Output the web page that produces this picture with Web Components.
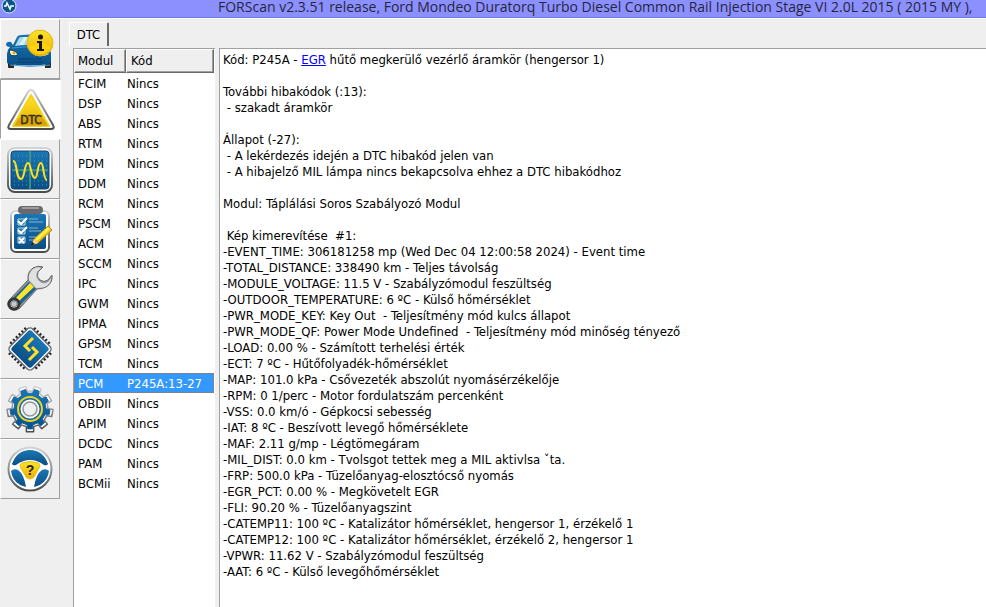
<!DOCTYPE html>
<html lang="hu">
<head>
<meta charset="utf-8">
<title>FORScan</title>
<style>
  body {
    margin: 0;
    background: #efefef;
    color: #000;
    font: 13px/16px "DejaVu Sans Condensed", "DejaVu Sans", sans-serif;
    font-stretch: condensed;
  }
  p {
    min-height: 16px;
    margin: 0;
    white-space: pre-wrap;
  }
  a { color: #00f; }
</style>
</head>
<body>
<forscan-window>
  <title-bar slot="title">FORScan v2.3.51 release, Ford Mondeo Duratorq Turbo Diesel Common Rail Injection Stage VI 2.0L 2015 ( 2015 MY ),</title-bar>
  <tool-button slot="tools" icon="car" label="Jármű"></tool-button>
  <tool-button slot="tools" icon="dtc" label="DTC" pressed></tool-button>
  <tool-button slot="tools" icon="scope" label="Oszcilloszkóp"></tool-button>
  <tool-button slot="tools" icon="tests" label="Tesztek"></tool-button>
  <tool-button slot="tools" icon="service" label="Szerviz"></tool-button>
  <tool-button slot="tools" icon="chip" label="Konfiguráció"></tool-button>
  <tool-button slot="tools" icon="gear" label="Beállítások"></tool-button>
  <tool-button slot="tools" icon="wheel" label="Súgó"></tool-button>
  <page-tab slot="tab">DTC</page-tab>
  <module-table slot="list" selected="PCM"></module-table>
  <report-view slot="report">
    <p>Kód: P245A - <a href="#egr">EGR</a> hűtő megkerülő vezérlő áramkör (hengersor 1)</p>
    <p></p>
    <p>További hibakódok (:13):</p>
    <p> - szakadt áramkör</p>
    <p></p>
    <p>Állapot (-27):</p>
    <p> - A lekérdezés idején a DTC hibakód jelen van</p>
    <p> - A hibajelző MIL lámpa nincs bekapcsolva ehhez a DTC hibakódhoz</p>
    <p></p>
    <p>Modul: Táplálási Soros Szabályozó Modul</p>
    <p></p>
    <p> Kép kimerevítése  #1:</p>
    <p>-EVENT_TIME: 306181258 mp (Wed Dec 04 12:00:58 2024) - Event time</p>
    <p>-TOTAL_DISTANCE: 338490 km - Teljes távolság</p>
    <p>-MODULE_VOLTAGE: 11.5 V - Szabályzómodul feszültség</p>
    <p>-OUTDOOR_TEMPERATURE: 6 ºC - Külső hőmérséklet</p>
    <p>-PWR_MODE_KEY: Key Out  - Teljesítmény mód kulcs állapot</p>
    <p>-PWR_MODE_QF: Power Mode Undefined  - Teljesítmény mód minőség tényező</p>
    <p>-LOAD: 0.00 % - Számított terhelési érték</p>
    <p>-ECT: 7 ºC - Hűtőfolyadék-hőmérséklet</p>
    <p>-MAP: 101.0 kPa - Csővezeték abszolút nyomásérzékelője</p>
    <p>-RPM: 0 1/perc - Motor fordulatszám percenként</p>
    <p>-VSS: 0.0 km/ó - Gépkocsi sebesség</p>
    <p>-IAT: 8 ºC - Beszívott levegő hőmérséklete</p>
    <p>-MAF: 2.11 g/mp - Légtömegáram</p>
    <p>-MIL_DIST: 0.0 km - Tvolsgot tettek meg a MIL aktivlsa ˇta.</p>
    <p>-FRP: 500.0 kPa - Tüzelőanyag-elosztócső nyomás</p>
    <p>-EGR_PCT: 0.00 % - Megkövetelt EGR</p>
    <p>-FLI: 90.20 % - Tüzelőanyagszint</p>
    <p>-CATEMP11: 100 ºC - Katalizátor hőmérséklet, hengersor 1, érzékelő 1</p>
    <p>-CATEMP12: 100 ºC - Katalizátor hőmérséklet, érzékelő 2, hengersor 1</p>
    <p>-VPWR: 11.62 V - Szabályzómodul feszültség</p>
    <p>-AAT: 6 ºC - Külső levegőhőmérséklet</p>
  </report-view>
</forscan-window>

<script>
const polar = (r, deg) => {
  const a = deg * Math.PI / 180
  return `${(30 + r * Math.cos(a)).toFixed(1)} ${(30 + r * Math.sin(a)).toFixed(1)}`
}

// nine-toothed outline around 30,30
const gearPath = (outer, inner, tip, root) => {
  const points = []
  for (let i = 0; i < 9; i++) {
    const a = i * 40 + 90
    points.push(polar(inner, a - root), polar(outer, a - tip), polar(outer, a + tip), polar(inner, a + root))
  }
  return `M${points.join('L')}Z`
}

const defs = `
  <defs>
    <linearGradient id="metal" x1="0" y1="0" x2="0" y2="1">
      <stop offset="0" stop-color="#d2d3d4"/><stop offset="1" stop-color="#4b4c4e"/>
    </linearGradient>
    <linearGradient id="blue" x1="0" y1="0" x2="0" y2="1">
      <stop offset="0" stop-color="#1b76b4"/><stop offset="1" stop-color="#0a4f86"/>
    </linearGradient>
    <linearGradient id="gold" x1="0" y1="0" x2="0" y2="1">
      <stop offset="0" stop-color="#ffe52a"/><stop offset="1" stop-color="#e7ae05"/>
    </linearGradient>
  </defs>
`

const icons = {
  car: `
    <path d="M8 43h6v6h-5q-1 0-1-1zM45 43h6v5q0 1-1 1h-5z" fill="#282828"/>
    <path d="M6 25q1-3 5-2l2 3 4-8q1-2 4-2 9-1 18 0 3 0 4 3l4 9q4 3 4 7v8q0 2-2 2-20 3-40 0-2 0-2-2v-8q0-4 3-7-4 0-4-3z" fill="url(#blue)"/>
    <path d="M15 27l4-8q1-1 3-1h15l4 9q-13-2-26 0z" fill="#a9dbea"/>
    <path d="M19 26l5-8h4l-5 8z" fill="#d8f2f5"/>
    <path d="M12 29q18-3 37 0" fill="none" stroke="#3c94cf"/>
    <path d="M9 31q7 0 9 5-6 2-8-1z" fill="#fff6c8" stroke="#073f70"/>
    <circle cx="14" cy="34" r="1.5" fill="#eda50d"/>
    <path d="M49 35l-5 2-3-1 3-4z" fill="#eef6d9"/>
    <path d="M18 40h24M17 43h26" stroke="#073e70"/>
    <path d="M10 46q20 3 40 0" fill="none" stroke="#4ba5d8"/>
    <circle cx="40" cy="24" r="13" fill="url(#gold)" stroke="#eab317"/>
    <path d="M29 28a12 12 0 0 0 22 0q-9-7-22 0z" fill="#ffd20c"/>
    <circle cx="40.500" cy="18" r="2.500" fill="#151515"/>
    <path d="M38 22h4v8h2v2h-7v-2h2v-6h-2v-2z" fill="#151515"/>`,
  dtc: `
    <path d="M31 11q2 0 3 2l19 33q2 4-2 4H11q-4 0-2-4l19-33q1-2 3-2z" fill="#fff" stroke="url(#metal)" stroke-width="2"/>
    <path d="M31 16L49 47H13z" fill="url(#gold)" stroke="#f6d117" stroke-width="2" stroke-linejoin="round"/>
    <path d="M18 40q14-8 26 0l4 7H14z" fill="#c69209" opacity=".5"/>
    <text x="31" y="45" text-anchor="middle" font-family="DejaVu Sans Condensed, DejaVu Sans" font-size="12" fill="#333019" stroke="#333019" stroke-width=".5">DTC</text>`,
  scope: `
    <rect x="8" y="9" width="44" height="44" rx="7" fill="#fff" stroke="url(#metal)" stroke-width="2"/>
    <rect x="11" y="12" width="38" height="38" rx="3" fill="url(#blue)" stroke="#174568"/>
    <path d="M14 17h33M14 22h33M14 27h33M14 32h33M14 37h33M14 42h33M14 46h33" stroke="#3faaa1" stroke-dasharray="1 3"/>
    <path d="M30 12v38M12 31h36" stroke="#4e9c7e" stroke-width="1.500"/>
    <path d="M13 22q2 0 3 5c1 7 2 13 5 13 4 0 3-16 7-16 3 0 3 15 7 15 3 0 2-15 6-15 3 0 2 17 6 17" fill="none" stroke="#ffe21b" stroke-width="2"/>`,
  tests: `
    <rect x="11" y="12" width="38" height="41" rx="5" fill="#fff" stroke="url(#metal)" stroke-width="2"/>
    <rect x="14" y="15" width="32" height="35" rx="2" fill="url(#blue)"/>
    <rect x="18" y="7" width="25" height="8" rx="4" fill="#67696c"/>
    <path d="M22 9h17" stroke="#9a9c9e" stroke-width="2"/>
    <path d="M18 20h7v6h-7zM18 29h7v6h-7zM18 38h7v6h-7z" fill="#2579a9" stroke="#b8dbe8"/>
    <path d="M18 22l3 3 6-6M18 31l3 3 6-6M19 39l5 5M24 39l-5 5" fill="none" stroke="#fff" stroke-width="2"/>
    <path d="M29 20h9M29 23h14M29 29h9M29 32h12M29 38h7M29 41h4" stroke="#82b4d2"/>
    <path d="M32 46l2-6L48 27l4 4-14 13z" fill="#f2c515" stroke="#b48a08"/>
    <path d="M35 40L48 28l2 2-13 12z" fill="#fff056"/>
    <path d="M32 46l2-6 4 4z" fill="#f5d7a0"/><path d="M31 47l1-4 3 2z" fill="#222"/>`,
  service: `
    <path d="M11 39l17-18q-1-8 5-12 5-3 10-1l-5 5q-2 5 2 8t8 0l4-5q1 8-6 12-4 2-9 2L20 49q-5 4-10 1-5-5 1-11z" fill="#929496" stroke="#696b6d"/>
    <path d="M29 21q-1-7 4-11 4-3 8-1l-4 4q-2 5 2 9t9 1l3-4q0 6-6 9-4 1-9 1z" fill="#dfe0e1"/>
    <path d="M12 40l17-17 7 7-17 17z" fill="#146399"/>
    <path d="M15 40l15-16 4 4-16 15z" fill="#ffe32a"/>
    <circle cx="14" cy="45" r="5" fill="#edf0f1" stroke="#343536" stroke-width="3"/>
    <circle cx="14" cy="45" r="3" fill="#c5c8c9" stroke="#8d8f90"/>`,
  chip: `
    <g transform="rotate(45 30 30)">
      <path d="M19 11v38M23 11v38M27 11v38M31 11v38M35 11v38M39 11v38M11 19h38M11 23h38M11 27h38M11 31h38M11 35h38M11 39h38" stroke="#252628" stroke-width="2"/>
      <rect x="14" y="14" width="32" height="32" rx="4" fill="#fff" stroke="#6d6e70" stroke-width="1.500"/>
      <rect x="16" y="16" width="28" height="28" rx="3" fill="url(#blue)"/>
    </g>
    <path d="M33 19L25 27L30 32M29 41L37 33L32 28" fill="none" stroke="#ffe02a" stroke-width="3"/>`,
  gear: `
    <path d="${gearPath(23, 18, 9, 12)}" fill="#fff" stroke="url(#metal)" stroke-width="1.500" stroke-linejoin="round"/>
    <path d="${gearPath(20, 16, 7, 11)}" fill="url(#blue)" stroke="#1567a3" stroke-linejoin="round"/>
    <circle cx="30" cy="30" r="12" fill="#176aa7" stroke="#e8d325" stroke-width="2"/>
    <circle cx="30" cy="30" r="8" fill="#efefef" stroke="#fff" stroke-width="3"/>
    <circle cx="30" cy="30" r="7" fill="#efefef" stroke="#939597" stroke-width="1.500"/>`,
  wheel: `
    <circle cx="30" cy="30" r="21.500" fill="#fff" stroke="url(#metal)" stroke-width="2"/>
    <path d="M12 25q5-14 18-14t18 14q-1 2-4 1-14-10-28 0-3 1-4-1z" fill="url(#blue)"/>
    <path d="M11 32q3-3 7-1 6 4 8 17-13-3-15-16zM49 32q-3-3-7-1-6 4-8 17 13-3 15-16z" fill="url(#blue)"/>
    <path d="M22 24q8-3 16 0 3 1 1 5l-5 9q-4 4-8 0l-5-9q-2-4 1-5z" fill="url(#gold)" stroke="#e9bd0d"/>
    <text x="30" y="36" text-anchor="middle" font-family="Liberation Sans" font-size="14" font-weight="bold" fill="#252414">?</text>`,
}

class ForscanWindow extends HTMLElement {
  constructor() {
    super()
    this.attachShadow({ mode: 'open' }).innerHTML = `
      <style>
        :host {
          display: flex;
          flex-direction: column;
          height: 100vh;
          overflow: hidden;
        }
        .body {
          display: flex;
          flex: 1;
          min-height: 0;
          border-top: 1px solid #fafafa;
        }
        nav {
          width: 61px;
          flex: none;
        }
        main {
          display: flex;
          flex: 1;
          flex-direction: column;
          min-width: 0;
          padding-left: 8px;
        }
        .panes {
          display: grid;
          grid-template-columns: 142px 1fr;
          flex: 1;
          gap: 4px;
          min-height: 0;
          padding-left: 4px;
        }
      </style>
      <slot name="title"></slot>
      <div class="body">
        <nav><slot name="tools"></slot></nav>
        <main>
          <slot name="tab"></slot>
          <div class="panes">
            <slot name="list"></slot>
            <slot name="report"></slot>
          </div>
        </main>
      </div>
    `
  }
}

class TitleBar extends HTMLElement {
  constructor() {
    super()
    this.attachShadow({ mode: 'open' }).innerHTML = `
      <style>
        :host {
          display: flex;
          box-sizing: border-box;
          height: 18px;
          overflow: hidden;
          padding-left: 1px;
          border-bottom: 1px solid #7478df;
          background: #8c90ff;
          color: #25263b;
          font: 14px/14px "Open Sans", "Noto Sans", sans-serif;
          font-stretch: normal;
          white-space: nowrap;
        }
        svg { flex: none; }
        span { padding-left: 201px; }
      </style>
      <svg width="16" height="14" viewBox="0 0 16 14" aria-hidden="true">
        <circle cx="8" cy="6" r="7" fill="#0d568a" stroke="#dfe9f2"/>
        <path d="M3 6h2l1-3 3 6 1-3h3" fill="none" stroke="#fff" stroke-width="1.500"/>
      </svg>
      <span><slot></slot></span>
    `
  }
}

class ToolButton extends HTMLElement {
  connectedCallback() {
    const root = this.shadowRoot || this.attachShadow({ mode: 'open' })
    root.innerHTML = `
      <style>
        :host { display: block; }
        button {
          display: block;
          box-sizing: border-box;
          width: 60px;
          height: 60px;
          padding: 0;
          border: 1px solid;
          border-color: #fff #a0a0a0 #a0a0a0 #fff;
          background: #efefef;
        }
        :host([pressed]) button {
          width: 61px;
          border-color: #a0a0a0 #fff #fff #a0a0a0;
          background: #fff;
        }
        svg {
          display: block;
          margin: -1px;
        }
      </style>
      <button type="button" aria-label="${this.getAttribute('label')}" aria-pressed="${this.hasAttribute('pressed')}">
        <svg width="60" height="60" viewBox="0 0 60 60" aria-hidden="true">${defs}${icons[this.getAttribute('icon')]}</svg>
      </button>
    `
  }
}

class PageTab extends HTMLElement {
  constructor() {
    super()
    this.attachShadow({ mode: 'open' }).innerHTML = `
      <style>
        :host {
          display: flex;
          height: 26px;
          padding-top: 3px;
        }
        button {
          box-sizing: border-box;
          width: 40px;
          height: 24px;
          padding: 0;
          border: 1px solid #fff;
          border-right: 2px solid #696969;
          border-bottom: 0;
          border-radius: 2px 2px 0 0;
          background: #efefef;
          color: inherit;
          font: inherit;
        }
      </style>
      <button type="button" role="tab" aria-selected="true"><slot></slot></button>
    `
  }
}

const modules = [
  'FCIM', 'DSP', 'ABS', 'RTM', 'PDM', 'DDM', 'RCM', 'PSCM', 'ACM', 'SCCM', 'IPC',
  'GWM', 'IPMA', 'GPSM', 'TCM', 'PCM', 'OBDII', 'APIM', 'DCDC', 'PAM', 'BCMii',
]
const codes = { PCM: 'P245A:13-27' }

class ModuleTable extends HTMLElement {
  connectedCallback() {
    const selected = this.getAttribute('selected')
    const rows = modules.map(name => `
      <tr${name === selected ? ' class="selected"' : ''}><td>${name}</td><td>${codes[name] || 'Nincs'}</td></tr>
    `).join('')
    const root = this.shadowRoot || this.attachShadow({ mode: 'open' })
    root.innerHTML = `
      <style>
        :host {
          display: block;
          overflow: hidden;
          padding-right: 1px;
          border: 1px solid #a0a0a0;
          border-right: 0;
          border-bottom: 0;
          background: #fff;
        }
        table {
          width: 100%;
          border-collapse: separate;
          border-spacing: 0;
          table-layout: fixed;
        }
        th, td {
          box-sizing: border-box;
          height: 20px;
          padding: 2px 0 0 4px;
          font-weight: normal;
          text-align: left;
        }
        th {
          height: 24px;
          padding-top: 0;
          border: 1px solid;
          border-color: #fff #696969 #696969 #fff;
          background: #efefef;
          box-shadow: inset -1px -1px #a0a0a0;
        }
        th:first-child {
          width: 52px;
          padding-left: 3px;
        }
        td + td { padding-left: 1px; }
        .selected td {
          border: 1px dotted #c66a1d;
          border-width: 1px 0;
          background: #39f;
          color: #fff;
        }
        .selected td:first-child {
          padding-left: 3px;
          border-left-width: 1px;
        }
        .selected td:last-child { border-right-width: 1px; }
      </style>
      <table>
        <thead><tr><th scope="col">Modul</th><th scope="col">Kód</th></tr></thead>
        <tbody>${rows}</tbody>
      </table>
    `
  }
}

class ReportView extends HTMLElement {
  constructor() {
    super()
    this.attachShadow({ mode: 'open' }).innerHTML = `
      <style>
        :host {
          display: block;
          overflow: hidden;
          padding: 3px;
          border: 1px solid #a0a0a0;
          border-right: 0;
          border-bottom: 0;
          background: #fff;
        }
      </style>
      <slot></slot>
    `
  }
}

customElements.define('forscan-window', ForscanWindow)
customElements.define('title-bar', TitleBar)
customElements.define('tool-button', ToolButton)
customElements.define('page-tab', PageTab)
customElements.define('module-table', ModuleTable)
customElements.define('report-view', ReportView)
</script>
</body>
</html>
